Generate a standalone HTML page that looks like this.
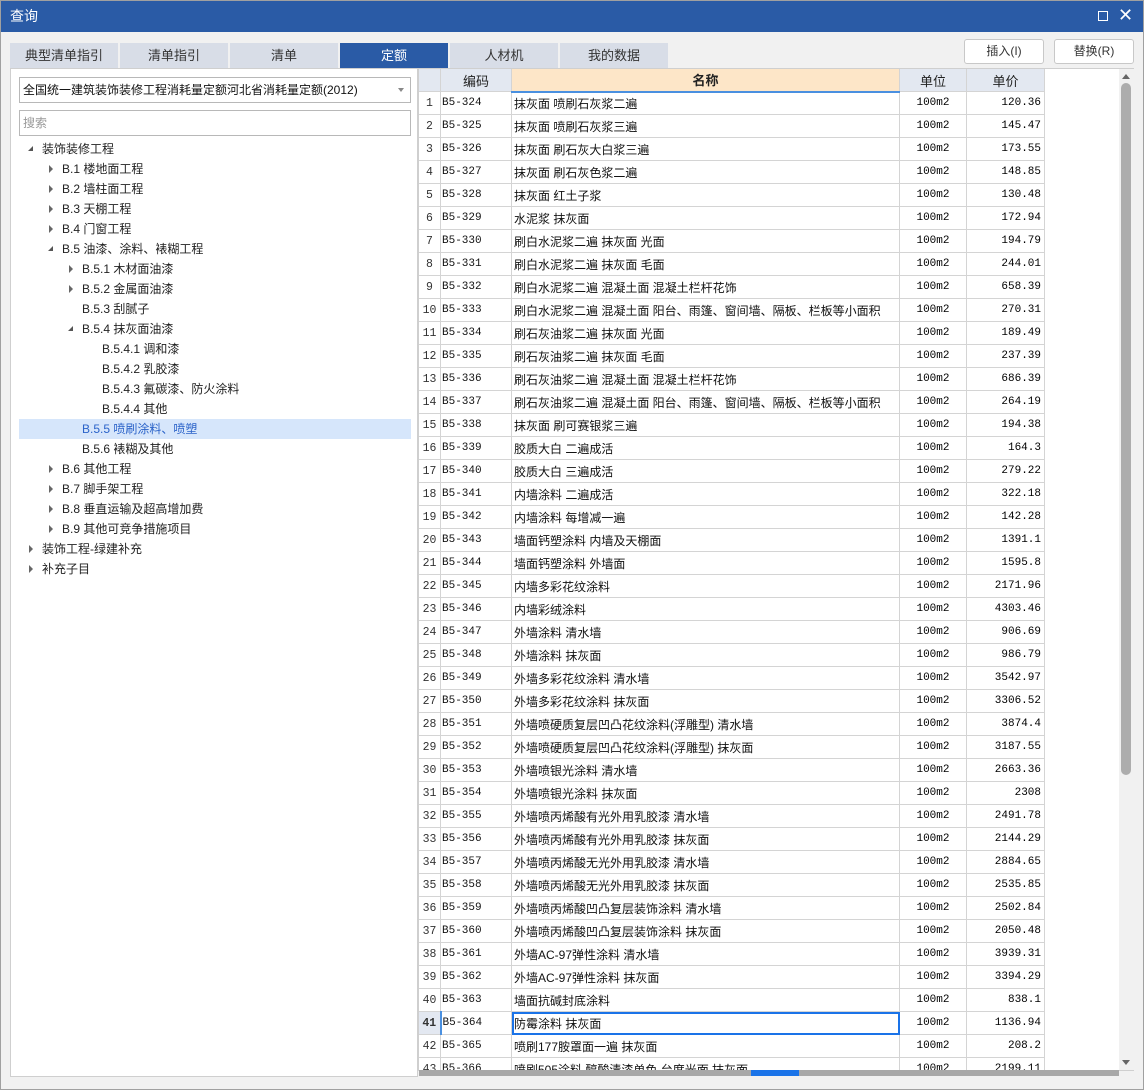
<!DOCTYPE html>
<html><head><meta charset="utf-8">
<style>
*{margin:0;padding:0;box-sizing:border-box}
body{width:1144px;height:1090px;background:#f1f1f1;font-family:"Liberation Sans","Noto Sans CJK SC",sans-serif;position:relative;overflow:hidden}
.frame{position:absolute;left:0;top:0;width:1144px;height:1090px;border:1px solid #a0a0a0;pointer-events:none}
.title{position:absolute;left:0;top:0;width:1144px;height:32px;background:#2a5ba6;color:#fff;font-size:14px;line-height:32px;padding-left:10px}
.tab{position:absolute;top:43px;height:25px;width:108px;background:#d8dde7;color:#333;font-size:13px;text-align:center;line-height:25px}
.tab.on{background:#2a5ba6;color:#fff}
.btn{position:absolute;top:39px;height:25px;width:80px;background:#fff;border:1px solid #c8c8c8;border-radius:3px;font-size:12px;text-align:center;line-height:23px;color:#333}
.left{position:absolute;left:10px;top:68px;width:408px;height:1009px;background:#fff;border:1px solid #cfcfcf}
.combo{position:absolute;left:8px;top:8px;width:392px;height:26px;border:1px solid #b8b8b8;font-size:12px;line-height:24px;padding-left:3px;color:#111}
.combo:after{content:"";position:absolute;right:6px;top:10px;border:3px solid transparent;border-top:4px solid #888}
.search{position:absolute;left:8px;top:41px;width:392px;height:26px;border:1px solid #b8b8b8;font-size:12px;line-height:24px;padding-left:3px;color:#999}
.tr{position:absolute;height:20px;line-height:20px;font-size:12px;color:#222;left:8px;width:392px}
.tr.sel{background:#d6e6fb;color:#2b63c9}
.ar{position:absolute;top:6px;width:0;height:0;border-top:4px solid transparent;border-bottom:4px solid transparent;border-left:4px solid #666}
.ad{position:absolute;top:7px;width:0;height:0;border-left:5px solid transparent;border-bottom:5px solid #555}
.grid{position:absolute;left:418px;top:68px;width:716px;height:1003px;background:#fff;border:1px solid #cfcfcf;overflow:hidden}
table{border-collapse:collapse;table-layout:fixed;position:absolute;left:-1px;top:-1px}
td,th{border:1px solid #d4d4d4;height:23px;font-weight:normal;font-size:12px;white-space:nowrap;overflow:hidden;padding:0}
th{background:#e3e8f1;height:23px;color:#222;font-size:13px}
th.nm{background:#fde6c8;border-bottom:2px solid #4a90e0;font-weight:bold}
td.n{background:#fff;text-align:center;font-family:"Liberation Mono",monospace;font-size:11.5px;color:#333}
td.c{font-family:"Liberation Mono",monospace;font-size:11px;padding-left:1px;color:#111}
td.m{padding-left:2px;color:#111;font-family:"Liberation Sans","Noto Sans CJK SC",sans-serif}
td.u{text-align:center;font-family:"Liberation Mono",monospace;font-size:11px}
td.p{text-align:right;padding-right:3px;font-family:"Liberation Mono",monospace;font-size:11px}
tr.act td.m{outline:2px solid #1a73e8;outline-offset:-2px}
tr.act td.n{font-weight:bold;background:#e3e8f1;border-right:2px solid #4a90e0}
.vs{position:absolute;left:1119px;top:69px;width:15px;height:1001px;background:#f1f1f1}
.thumb{position:absolute;left:1121px;top:83px;width:10px;height:692px;background:#adadad;border-radius:5px}
.hs{position:absolute;left:419px;top:1070px;width:700px;height:6px;background:#a8a8a8}
.hthumb{position:absolute;left:751px;top:1070px;width:48px;height:6px;background:#1a73e8}
</style></head><body>
<div class="title">查询</div>
<div style="position:absolute;left:1098px;top:11px;width:10px;height:10px;border:1.5px solid #fff"></div>
<div style="position:absolute;left:1118px;top:5px;color:#fff;font-size:18px;line-height:20px">✕</div>
<div class="tab" style="left:10px">典型清单指引</div>
<div class="tab" style="left:120px">清单指引</div>
<div class="tab" style="left:230px">清单</div>
<div class="tab on" style="left:340px">定额</div>
<div class="tab" style="left:450px">人材机</div>
<div class="tab" style="left:560px">我的数据</div>
<div class="btn" style="left:964px">插入(I)</div>
<div class="btn" style="left:1054px">替换(R)</div>
<div class="left">
<div class="combo">全国统一建筑装饰装修工程消耗量定额河北省消耗量定额(2012)</div>
<div class="search">搜索</div>
<div class="tr" style="top:70px"><i class="ad" style="left:9px"></i><span style="position:absolute;left:23px">装饰装修工程</span></div>
<div class="tr" style="top:90px"><i class="ar" style="left:30px"></i><span style="position:absolute;left:43px">B.1 楼地面工程</span></div>
<div class="tr" style="top:110px"><i class="ar" style="left:30px"></i><span style="position:absolute;left:43px">B.2 墙柱面工程</span></div>
<div class="tr" style="top:130px"><i class="ar" style="left:30px"></i><span style="position:absolute;left:43px">B.3 天棚工程</span></div>
<div class="tr" style="top:150px"><i class="ar" style="left:30px"></i><span style="position:absolute;left:43px">B.4 门窗工程</span></div>
<div class="tr" style="top:170px"><i class="ad" style="left:29px"></i><span style="position:absolute;left:43px">B.5 油漆、涂料、裱糊工程</span></div>
<div class="tr" style="top:190px"><i class="ar" style="left:50px"></i><span style="position:absolute;left:63px">B.5.1 木材面油漆</span></div>
<div class="tr" style="top:210px"><i class="ar" style="left:50px"></i><span style="position:absolute;left:63px">B.5.2 金属面油漆</span></div>
<div class="tr" style="top:230px"><span style="position:absolute;left:63px">B.5.3 刮腻子</span></div>
<div class="tr" style="top:250px"><i class="ad" style="left:49px"></i><span style="position:absolute;left:63px">B.5.4 抹灰面油漆</span></div>
<div class="tr" style="top:270px"><span style="position:absolute;left:83px">B.5.4.1 调和漆</span></div>
<div class="tr" style="top:290px"><span style="position:absolute;left:83px">B.5.4.2 乳胶漆</span></div>
<div class="tr" style="top:310px"><span style="position:absolute;left:83px">B.5.4.3 氟碳漆、防火涂料</span></div>
<div class="tr" style="top:330px"><span style="position:absolute;left:83px">B.5.4.4 其他</span></div>
<div class="tr sel" style="top:350px"><span style="position:absolute;left:63px">B.5.5 喷刷涂料、喷塑</span></div>
<div class="tr" style="top:370px"><span style="position:absolute;left:63px">B.5.6 裱糊及其他</span></div>
<div class="tr" style="top:390px"><i class="ar" style="left:30px"></i><span style="position:absolute;left:43px">B.6 其他工程</span></div>
<div class="tr" style="top:410px"><i class="ar" style="left:30px"></i><span style="position:absolute;left:43px">B.7 脚手架工程</span></div>
<div class="tr" style="top:430px"><i class="ar" style="left:30px"></i><span style="position:absolute;left:43px">B.8 垂直运输及超高增加费</span></div>
<div class="tr" style="top:450px"><i class="ar" style="left:30px"></i><span style="position:absolute;left:43px">B.9 其他可竞争措施项目</span></div>
<div class="tr" style="top:470px"><i class="ar" style="left:10px"></i><span style="position:absolute;left:23px">装饰工程-绿建补充</span></div>
<div class="tr" style="top:490px"><i class="ar" style="left:10px"></i><span style="position:absolute;left:23px">补充子目</span></div>
</div>
<div class="grid">
<table>
<colgroup><col style="width:22px"><col style="width:71px"><col style="width:388px"><col style="width:67px"><col style="width:78px"></colgroup>
<tr><th></th><th>编码</th><th class="nm">名称</th><th>单位</th><th>单价</th></tr>
<tr><td class="n">1</td><td class="c">B5-324</td><td class="m">抹灰面 喷刷石灰浆二遍</td><td class="u">100m2</td><td class="p">120.36</td></tr>
<tr><td class="n">2</td><td class="c">B5-325</td><td class="m">抹灰面 喷刷石灰浆三遍</td><td class="u">100m2</td><td class="p">145.47</td></tr>
<tr><td class="n">3</td><td class="c">B5-326</td><td class="m">抹灰面 刷石灰大白浆三遍</td><td class="u">100m2</td><td class="p">173.55</td></tr>
<tr><td class="n">4</td><td class="c">B5-327</td><td class="m">抹灰面 刷石灰色浆二遍</td><td class="u">100m2</td><td class="p">148.85</td></tr>
<tr><td class="n">5</td><td class="c">B5-328</td><td class="m">抹灰面 红土子浆</td><td class="u">100m2</td><td class="p">130.48</td></tr>
<tr><td class="n">6</td><td class="c">B5-329</td><td class="m">水泥浆 抹灰面</td><td class="u">100m2</td><td class="p">172.94</td></tr>
<tr><td class="n">7</td><td class="c">B5-330</td><td class="m">刷白水泥浆二遍 抹灰面 光面</td><td class="u">100m2</td><td class="p">194.79</td></tr>
<tr><td class="n">8</td><td class="c">B5-331</td><td class="m">刷白水泥浆二遍 抹灰面 毛面</td><td class="u">100m2</td><td class="p">244.01</td></tr>
<tr><td class="n">9</td><td class="c">B5-332</td><td class="m">刷白水泥浆二遍 混凝土面 混凝土栏杆花饰</td><td class="u">100m2</td><td class="p">658.39</td></tr>
<tr><td class="n">10</td><td class="c">B5-333</td><td class="m">刷白水泥浆二遍 混凝土面 阳台、雨篷、窗间墙、隔板、栏板等小面积</td><td class="u">100m2</td><td class="p">270.31</td></tr>
<tr><td class="n">11</td><td class="c">B5-334</td><td class="m">刷石灰油浆二遍 抹灰面 光面</td><td class="u">100m2</td><td class="p">189.49</td></tr>
<tr><td class="n">12</td><td class="c">B5-335</td><td class="m">刷石灰油浆二遍 抹灰面 毛面</td><td class="u">100m2</td><td class="p">237.39</td></tr>
<tr><td class="n">13</td><td class="c">B5-336</td><td class="m">刷石灰油浆二遍 混凝土面 混凝土栏杆花饰</td><td class="u">100m2</td><td class="p">686.39</td></tr>
<tr><td class="n">14</td><td class="c">B5-337</td><td class="m">刷石灰油浆二遍 混凝土面 阳台、雨篷、窗间墙、隔板、栏板等小面积</td><td class="u">100m2</td><td class="p">264.19</td></tr>
<tr><td class="n">15</td><td class="c">B5-338</td><td class="m">抹灰面 刷可赛银浆三遍</td><td class="u">100m2</td><td class="p">194.38</td></tr>
<tr><td class="n">16</td><td class="c">B5-339</td><td class="m">胶质大白 二遍成活</td><td class="u">100m2</td><td class="p">164.3</td></tr>
<tr><td class="n">17</td><td class="c">B5-340</td><td class="m">胶质大白 三遍成活</td><td class="u">100m2</td><td class="p">279.22</td></tr>
<tr><td class="n">18</td><td class="c">B5-341</td><td class="m">内墙涂料 二遍成活</td><td class="u">100m2</td><td class="p">322.18</td></tr>
<tr><td class="n">19</td><td class="c">B5-342</td><td class="m">内墙涂料 每增减一遍</td><td class="u">100m2</td><td class="p">142.28</td></tr>
<tr><td class="n">20</td><td class="c">B5-343</td><td class="m">墙面钙塑涂料 内墙及天棚面</td><td class="u">100m2</td><td class="p">1391.1</td></tr>
<tr><td class="n">21</td><td class="c">B5-344</td><td class="m">墙面钙塑涂料 外墙面</td><td class="u">100m2</td><td class="p">1595.8</td></tr>
<tr><td class="n">22</td><td class="c">B5-345</td><td class="m">内墙多彩花纹涂料</td><td class="u">100m2</td><td class="p">2171.96</td></tr>
<tr><td class="n">23</td><td class="c">B5-346</td><td class="m">内墙彩绒涂料</td><td class="u">100m2</td><td class="p">4303.46</td></tr>
<tr><td class="n">24</td><td class="c">B5-347</td><td class="m">外墙涂料 清水墙</td><td class="u">100m2</td><td class="p">906.69</td></tr>
<tr><td class="n">25</td><td class="c">B5-348</td><td class="m">外墙涂料 抹灰面</td><td class="u">100m2</td><td class="p">986.79</td></tr>
<tr><td class="n">26</td><td class="c">B5-349</td><td class="m">外墙多彩花纹涂料 清水墙</td><td class="u">100m2</td><td class="p">3542.97</td></tr>
<tr><td class="n">27</td><td class="c">B5-350</td><td class="m">外墙多彩花纹涂料 抹灰面</td><td class="u">100m2</td><td class="p">3306.52</td></tr>
<tr><td class="n">28</td><td class="c">B5-351</td><td class="m">外墙喷硬质复层凹凸花纹涂料(浮雕型) 清水墙</td><td class="u">100m2</td><td class="p">3874.4</td></tr>
<tr><td class="n">29</td><td class="c">B5-352</td><td class="m">外墙喷硬质复层凹凸花纹涂料(浮雕型) 抹灰面</td><td class="u">100m2</td><td class="p">3187.55</td></tr>
<tr><td class="n">30</td><td class="c">B5-353</td><td class="m">外墙喷银光涂料 清水墙</td><td class="u">100m2</td><td class="p">2663.36</td></tr>
<tr><td class="n">31</td><td class="c">B5-354</td><td class="m">外墙喷银光涂料 抹灰面</td><td class="u">100m2</td><td class="p">2308</td></tr>
<tr><td class="n">32</td><td class="c">B5-355</td><td class="m">外墙喷丙烯酸有光外用乳胶漆 清水墙</td><td class="u">100m2</td><td class="p">2491.78</td></tr>
<tr><td class="n">33</td><td class="c">B5-356</td><td class="m">外墙喷丙烯酸有光外用乳胶漆 抹灰面</td><td class="u">100m2</td><td class="p">2144.29</td></tr>
<tr><td class="n">34</td><td class="c">B5-357</td><td class="m">外墙喷丙烯酸无光外用乳胶漆 清水墙</td><td class="u">100m2</td><td class="p">2884.65</td></tr>
<tr><td class="n">35</td><td class="c">B5-358</td><td class="m">外墙喷丙烯酸无光外用乳胶漆 抹灰面</td><td class="u">100m2</td><td class="p">2535.85</td></tr>
<tr><td class="n">36</td><td class="c">B5-359</td><td class="m">外墙喷丙烯酸凹凸复层装饰涂料 清水墙</td><td class="u">100m2</td><td class="p">2502.84</td></tr>
<tr><td class="n">37</td><td class="c">B5-360</td><td class="m">外墙喷丙烯酸凹凸复层装饰涂料 抹灰面</td><td class="u">100m2</td><td class="p">2050.48</td></tr>
<tr><td class="n">38</td><td class="c">B5-361</td><td class="m">外墙AC-97弹性涂料 清水墙</td><td class="u">100m2</td><td class="p">3939.31</td></tr>
<tr><td class="n">39</td><td class="c">B5-362</td><td class="m">外墙AC-97弹性涂料 抹灰面</td><td class="u">100m2</td><td class="p">3394.29</td></tr>
<tr><td class="n">40</td><td class="c">B5-363</td><td class="m">墙面抗碱封底涂料</td><td class="u">100m2</td><td class="p">838.1</td></tr>
<tr class="act"><td class="n">41</td><td class="c">B5-364</td><td class="m">防霉涂料 抹灰面</td><td class="u">100m2</td><td class="p">1136.94</td></tr>
<tr><td class="n">42</td><td class="c">B5-365</td><td class="m">喷刷177胺罩面一遍 抹灰面</td><td class="u">100m2</td><td class="p">208.2</td></tr>
<tr><td class="n">43</td><td class="c">B5-366</td><td class="m">喷刷505涂料 醇酸清漆单色 台度光面 抹灰面</td><td class="u">100m2</td><td class="p">2199.11</td></tr>
</table>
</div>
<div class="vs"></div>
<div style="position:absolute;left:1122px;top:74px;border:4px solid transparent;border-bottom:5px solid #666;border-top:0"></div>
<div class="thumb"></div>
<div style="position:absolute;left:1122px;top:1060px;border:4px solid transparent;border-top:5px solid #666;border-bottom:0"></div>
<div class="hs"></div><div class="hthumb"></div>
<div class="frame"></div>
</body></html>
